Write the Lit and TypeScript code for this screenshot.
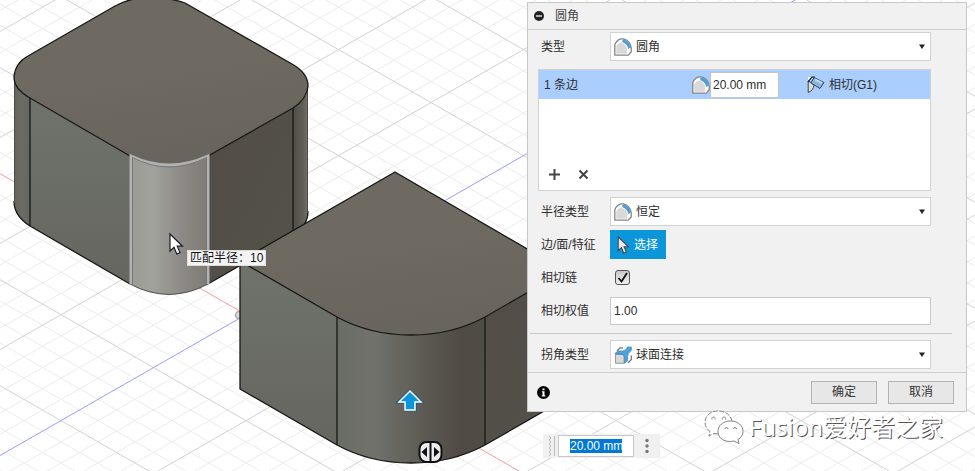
import { LitElement, html, svg, css } from "lit";
import { customElement } from "lit/decorators.js";

const HALF_W = 92.5;
const HALF_H = 53;
const ORIGIN = { x: 246, y: 314.6 };
const SLOPE = HALF_H / HALF_W;

/* Isometric ground grid: every fifth line is a major one, line 0 is an axis. */
const gridLine = (n: number, dir: number) => {
  const left = -600;
  const right = 3000;
  const at = (x: number) => ORIGIN.y + (n * HALF_H * 2) / 5 + dir * SLOPE * (x - ORIGIN.x);
  const cls = n === 0 ? (dir > 0 ? "axis-x" : "axis-y") : n % 5 === 0 ? "major" : "minor";
  return svg`<line class=${cls} x1=${left} y1=${at(left)} x2=${right} y2=${at(right)} />`;
};

const range = Array.from({ length: 241 }, (_, i) => i - 120);
const order = [...range.filter((n) => n % 5 !== 0), ...range.filter((n) => n % 5 === 0 && n !== 0), 0];

const filletIcon = html`<svg class="icon" viewBox="0 0 18 18" aria-hidden="true">
  <path d="M0.800 17.200V6.500Q2.500 2 7 0.800H9.500Q16 2.500 17.200 9.500V14L14 17.200Z" fill="#fff" stroke="#858585" stroke-width="1.300" stroke-linejoin="round" />
  <path d="M2.200 15.800V8.500Q3.500 5 7.500 4.500Q12.800 6 13.300 11.500V15.800Z" fill="#d9d9d9" />
  <path d="M8.500 1.200Q16 2.500 17 9.500L14 11Q13.200 6 8.200 4.600Z" fill="#4f9fd6" />
  <path d="M8 4.600Q13 6 13.800 11.500V16.500" fill="none" stroke="#fff" />
</svg>`;

const tangentIcon = html`<svg class="icon" viewBox="0 0 18 18" aria-hidden="true">
  <path d="M1.200 5V16.500Q6.500 14.500 7 9L4 6.500Z" fill="#ddddd8" stroke="#444" stroke-linejoin="round" />
  <path d="M1 3.500V1H6L3.500 5Z" fill="#fff" />
  <path d="M1 6L5 1.200L8 1.200" fill="none" stroke="#222" stroke-width="1.300" />
  <path d="M7 1.500L17 6.500L13 12.500L4 7Z" fill="#8bb4da" stroke="#2c4868" stroke-linejoin="round" />
  <path d="M8 3.500L15 7" stroke="#bcd7ef" stroke-width="2" />
</svg>`;

const cornerIcon = html`<svg class="icon" viewBox="0 0 18 18" aria-hidden="true">
  <path d="M1.500 8.500H10V17.300H1.500Z" fill="#d9d9d9" stroke="#999" />
  <path d="M3 5L6 1.800H9M17.300 9.500V13.500L14 17" fill="none" stroke="#777" stroke-width="1.300" />
  <path d="M1 7.500L4 5H9Q12.500 4 13.500 1H17.300V4.500Q13.500 7 13.500 11V15L10.500 17.300V11Q10 8 7 8H1Z" fill="#4fa3dc" stroke="#3585ba" stroke-width=".7" />
</svg>`;

const pointer = "M0 0V17L4 13.200L6.800 20L10 18.600L7.200 12.200H12.500Z";

@customElement("app-root")
export class AppRoot extends LitElement {
  static styles = css`
    :host {
      display: block;
      position: relative;
      min-height: 100vh;
      overflow: hidden;
      background: #fff;
      color: #2e2e2e;
      font: 12px/16px "Liberation Sans", "Noto Sans CJK SC", sans-serif;
    }
    * { box-sizing: border-box; }
    input, select, button { font: inherit; color: inherit; margin: 0; border-radius: 0; }
    .scene { position: absolute; inset: 0; width: 100%; height: 100%; display: block; }
    .minor { stroke: #ececec; }
    .major { stroke: #d2d2d2; }
    .axis-x { stroke: #f99b9b; }
    .axis-y { stroke: #9c9cfa; }
    .edge { fill: none; stroke: #171714; stroke-width: 1.3; stroke-linejoin: round; }
    .thin { fill: none; stroke: #4c4c48; }
    .glow { fill: none; stroke: #b2b2b2; stroke-width: 3; }
    .glow-core { fill: none; stroke: #777; stroke-width: 1; }
    .icon { display: block; width: 18px; height: 18px; flex: none; }

    .tip {
      position: absolute; left: 187px; top: 250px; height: 16px; padding: 0 2px;
      background: #f4f4f4; border: 1px solid #ddd; line-height: 14px; color: #111; white-space: nowrap;
    }

    .panel {
      position: absolute; left: 527px; right: 8px; top: 2px; min-width: 400px;
      background: #f1f1f1; border: 1px solid #c8c8c8;
    }
    .head {
      display: flex; align-items: center; height: 27px; gap: 11px; padding: 0 6px;
      border-bottom: 1px solid #cdcdcd;
    }
    .title { margin: 0; font-size: 12px; font-weight: 400; color: #444; }
    .fold { display: flex; padding: 0; border: 0; background: none; }
    .fold svg { width: 10px; height: 10px; }
    .form { padding: 2px 35px 0 10px; }
    .form.corner { padding-top: 0; }
    .row { display: grid; grid-template-columns: 70px 1fr; align-items: center; height: 29px; padding-left: 2px; }
    .row + .row { margin-top: 4px; }
    .row label { padding-left: 1px; }
    .combo { display: flex; position: relative; height: 29px; align-items: center; }
    .combo .icon { position: absolute; left: 4px; pointer-events: none; }
    .combo select {
      width: 100%; height: 100%; padding: 0 24px 0 25px; appearance: none;
      border: 1px solid #d2d2d2; background: #fff; outline: 0;
    }
    .caret { position: absolute; right: 6px; width: 6px; height: 5px; pointer-events: none; }
    .list {
      display: flex; flex-direction: column; justify-content: space-between;
      height: 122px; margin: 8px 0 6px; border: 1px solid #d2d2d2; background: #fff;
    }
    .item {
      display: grid; grid-template-columns: 148px 1fr 123px; align-items: center;
      height: 29px; padding-left: 5px; background: #aacfff;
    }
    .size { display: flex; align-items: center; }
    .size input { width: 69px; height: 26px; padding: 0 2px; border: 1px solid #c4c4c4; background: #fff; outline: 0; }
    .tangent { display: flex; align-items: center; gap: 4px; }
    .tangent select { appearance: none; border: 0; padding: 0; background: none; outline: 0; height: 24px; }
    .tools { display: flex; gap: 16px; padding: 0 0 9px 9px; }
    .tools button { display: flex; padding: 0; border: 0; background: none; }
    .tools svg { width: 13px; height: 13px; fill: none; stroke: #444; stroke-width: 2; }
    .pick {
      display: flex; align-items: center; justify-self: start; gap: 4px; width: 56px; height: 29px;
      padding: 0 0 0 7px; border: 0; background: #0c96da; color: #fff; white-space: nowrap;
    }
    .pick svg { width: 13px; height: 18px; flex: none; }
    .check {
      appearance: none; width: 15px; height: 15px; margin-left: 5px;
      border: 1px solid #555; border-radius: 3px; background: linear-gradient(#c8c8c8, #efefef);
    }
    .tick { display: flex; position: relative; }
    .tick svg { position: absolute; left: 7px; top: 2px; width: 11px; height: 11px; pointer-events: none; }
    .field { width: 100%; height: 28px; padding: 0 3px; border: 1px solid #c9c9c9; background: #fff; outline: 0; }
    .rule { height: 1px; margin: 8px 14px 6px 2px; border: 0; background: #c6c6c6; }
    .foot {
      display: flex; align-items: center; gap: 11px; height: 39px; margin-top: 3px; padding: 0 12px 0 9px;
      border-top: 1px solid #cdcdcd;
    }
    .info { display: flex; margin-right: auto; padding: 0; border: 0; background: none; }
    .info svg { width: 13px; height: 13px; }
    .action { width: 66px; height: 23px; padding: 0; border: 1px solid #b4b4b4; background: #e7e7e7; color: #333; }

    .manip {
      position: absolute; left: 543px; top: 434px; height: 24px; display: flex; align-items: center; gap: 2px;
      background: #f0f0f0; padding-right: 10px;
    }
    .grip { width: 13px; height: 22px; }
    .manip input {
      width: 76px; height: 22px; padding: 3px 11px; border: 1px solid #c8c8c8; outline: 0; color: #fff;
      background: linear-gradient(#0078d7, #0078d7) content-box, #fff;
    }
    .more { display: flex; margin-left: 8px; padding: 0; border: 0; background: none; }
    .more svg { width: 6px; height: 16px; }

    .mark {
      position: absolute; right: 32px; top: 408px; display: flex; align-items: center; gap: 5px;
      font: 24px/38px "Noto Sans", "Noto Sans CJK SC", sans-serif;
      color: #fff; text-shadow: 1px 1px 0 #555; white-space: nowrap;
    }
    .mark svg { width: 41px; height: 36px; }
  `;

  private combo(id: string, value: string, icon: unknown) {
    return html`<div class="combo">
      <select id=${id}><option>${value}</option></select>
      ${icon}
      <svg class="caret" viewBox="0 0 6 5" aria-hidden="true"><path d="M0 .5H6L3 5Z" fill="#222" /></svg>
    </div>`;
  }

  private scene() {
    return html`<svg class="scene" aria-hidden="true">
      <defs>
        <linearGradient id="top" x1="0" y1="0" x2=".3" y2="1">
          <stop offset="0" stop-color="#6e6a63" /><stop offset=".5" stop-color="#6e6a61" /><stop offset="1" stop-color="#69645d" />
        </linearGradient>
        <linearGradient id="left" x1="0" y1="0" x2="0" y2="1">
          <stop offset="0" stop-color="#70726c" /><stop offset="1" stop-color="#656660" />
        </linearGradient>
        <linearGradient id="right" x1="0" y1="0" x2="1" y2="1">
          <stop offset="0" stop-color="#514d46" /><stop offset="1" stop-color="#55524a" />
        </linearGradient>
        <linearGradient id="cornerL"><stop offset="0" stop-color="#65635b" /><stop offset=".5" stop-color="#6b6c66" /><stop offset="1" stop-color="#63655f" /></linearGradient>
        <linearGradient id="cornerR"><stop offset="0" stop-color="#504d46" /><stop offset=".7" stop-color="#625f58" /><stop offset="1" stop-color="#77736a" /></linearGradient>
        <linearGradient id="hot"><stop offset="0" stop-color="#9a9b95" /><stop offset=".3" stop-color="#a1a29c" /><stop offset=".65" stop-color="#8d8b87" /><stop offset="1" stop-color="#7e7a75" /></linearGradient>
        <linearGradient id="round"><stop offset="0" stop-color="#6a6c66" /><stop offset=".25" stop-color="#70726b" /><stop offset=".6" stop-color="#5b5952" /><stop offset=".85" stop-color="#4f4b44" /><stop offset="1" stop-color="#504d45" /></linearGradient>
      </defs>
      ${order.map((n) => [gridLine(n, 1), gridLine(n, -1)])}

      <circle cx="239" cy="315" r="3.500" fill="#ddd" stroke="#aaa" stroke-width="1.500" />

      <path d="M14 77V203Q15 217 30 226V98Q14 89 14 77Z" fill="url(#cornerL)" />
      <path d="M30 98V226L130 284V156Z" fill="url(#left)" />
      <path d="M208 156V284L293 235V108Z" fill="url(#right)" />
      <path d="M293 108V235Q308 226 308 213V86Q308 98 293 108Z" fill="url(#cornerR)" />
      <path d="M130 156V284Q148 294 169 294.500Q190 294 208 284V156Q169 176 130 156Z" fill="url(#hot)" />
      <path class="edge" d="M14 201Q14 216 30 226L130 284M208 284L293 235Q308 226 308 211M30 98V226M293 108V235" />
      <path class="thin" d="M14.500 77V203M307.500 86V213M130 284Q148 294 169 294.500Q190 294 208 284" />
      <path d="M14 77Q15 63 28 56L115 6Q145 -10 185 3L292 64Q308 73 308 86Q307 99 293 108L208 156Q169 176 130 156L30 98Q14 89 14 77Z" fill="url(#top)" />
      <path class="edge" d="M130 156L30 98Q14 89 14 77Q15 63 28 56L115 6Q145 -10 185 3L292 64Q308 73 308 86Q307 99 293 108L208 156" />
      <path class="glow" d="M131 284V156Q169 174 208 156V284" />
      <path class="glow-core" d="M132.500 284V157.500Q169 176.500 206.500 157.500V284" />

      <path d="M240 258V389L337 445V317Z" fill="url(#left)" />
      <path d="M485 317V445L640 356V228Z" fill="url(#right)" />
      <path d="M337 317V445Q370 463 411 463Q452 463 485 445V317Q410 353 337 317Z" fill="url(#round)" />
      <path d="M395 172L240 261L337 317Q370 335 411 335Q452 335 485 317L565 271Z" fill="url(#top)" />
      <path class="edge" d="M565 271L395 172L240 261L337 317Q370 335 411 335Q452 335 485 317L565 271M240 261V389L337 445Q370 463 411 463Q452 463 485 445L640 356M337 317V445M485 317V445" />

      <path d="M410 391L421.500 402H415.500V410H405.500V402H398.500Z" fill="#0c96da" stroke="#245a80" stroke-width="3" />
      <path d="M410 391L421 402H415V410H405V402H399Z" fill="#0c96da" stroke="#fff" stroke-width="1.500" />
      <rect x="419.500" y="442" width="22" height="20" rx="7" fill="#ececec" stroke="#111" stroke-width="2" />
      <path d="M430.500 442V462" stroke="#111" stroke-width="2" />
      <path d="M427 447V457L421.500 452ZM434 447V457L439.500 452Z" fill="#111" />
      <path transform="translate(170 234)" d=${pointer} fill="#fff" stroke="#1c1c28" stroke-width="1.200" />
    </svg>`;
  }

  render() {
    return html`
      ${this.scene()}
      <div class="tip" role="tooltip">匹配半径：10</div>

      <section class="panel" aria-labelledby="title">
        <header class="head">
          <button class="fold" aria-label="折叠">
            <svg viewBox="0 0 10 10"><circle cx="5" cy="5" r="5" fill="#222" /><path d="M2 5H8" stroke="#ddd" stroke-width="1.500" /></svg>
          </button>
          <h1 class="title" id="title">圆角</h1>
        </header>

        <div class="form">
          <div class="row"><label for="kind">类型</label>${this.combo("kind", "圆角", filletIcon)}</div>

          <div class="list">
            <div class="item">
              <span>1 条边</span>
              <span class="size">${filletIcon}<input aria-label="半径" value="20.00 mm" /></span>
              <span class="tangent">${tangentIcon}<select aria-label="连续性"><option>相切(G1)</option></select></span>
            </div>
            <div class="tools">
              <button aria-label="添加"><svg viewBox="0 0 13 13"><path d="M6.500 1V12M1 6.500H12" /></svg></button>
              <button aria-label="删除"><svg viewBox="0 0 13 13"><path d="M2.500 2.500L10.500 10.500M10.500 2.500L2.500 10.500" /></svg></button>
            </div>
          </div>

          <div class="row"><label for="radius">半径类型</label>${this.combo("radius", "恒定", filletIcon)}</div>
          <div class="row">
            <label for="pick">边/面/特征</label>
            <button class="pick" id="pick">
              <svg viewBox="-1 -1 15 22" aria-hidden="true"><path d=${pointer} fill="#e8e8e8" stroke="#444" stroke-width="1.300" /></svg>选择
            </button>
          </div>
          <div class="row">
            <label for="chain">相切链</label>
            <span class="tick">
              <input class="check" type="checkbox" id="chain" checked />
              <svg viewBox="0 0 11 11" aria-hidden="true"><path d="M1.500 6L4.500 9.500L10 1" fill="none" stroke="#111" stroke-width="1.800" /></svg>
            </span>
          </div>
          <div class="row"><label for="weight">相切权值</label><input class="field" id="weight" value="1.00" /></div>
        </div>
        <hr class="rule" />
        <div class="form corner">
          <div class="row"><label for="corner">拐角类型</label>${this.combo("corner", "球面连接", cornerIcon)}</div>
        </div>
        <footer class="foot">
          <button class="info" aria-label="信息">
            <svg viewBox="0 0 13 13"><circle cx="6.500" cy="6.500" r="6.500" fill="#000" /><path d="M5.500 2.500H7.500V4.200H5.500ZM4.800 5.200H7.500V9.300H8.300V10.500H4.800V9.300H5.500V6.300H4.800Z" fill="#fff" /></svg>
          </button>
          <button class="action">确定</button>
          <button class="action">取消</button>
        </footer>
      </section>

      <div class="manip">
        <svg class="grip" viewBox="0 0 13 22" aria-hidden="true">
          <path d="M6 1L8 3L6 5L8 7L6 9L8 11L6 13L8 15L6 17L8 19L6 21" fill="none" stroke="#bbb" />
          <path d="M11.500 1V21" stroke="#bbb" />
        </svg>
        <input aria-label="圆角半径" value="20.00 mm" />
        <button class="more" aria-label="更多">
          <svg viewBox="0 0 6 16"><circle cx="3" cy="2.500" r="1.700" fill="#777" /><circle cx="3" cy="8" r="1.700" fill="#777" /><circle cx="3" cy="13.500" r="1.700" fill="#777" /></svg>
        </button>
      </div>

      <div class="mark">
        <svg viewBox="0 0 41 36" aria-hidden="true">
          <g fill="#fff" stroke="#777" stroke-width=".9">
            <path d="M15 2C7 2 2 7 2 13.500C2 17.500 4 20.500 7 22.500L6 27L11 24.500C21 26.500 29 21 29 13.500C29 7 23 2 15 2Z" stroke-dasharray="5 1.500" />
            <path d="M27.500 12C20 12 15 16.500 15 22.500C15 29.500 22 34 31 32L36 34.500L35 30.500C38.500 28.500 40 25.500 40 22.500C40 16.500 35 12 27.500 12Z" />
            <path d="M9 10.500A1.700 1.700 0 1 1 12 10.500M19.500 10.500A1.700 1.700 0 1 1 22.500 10.500M22 20A1.500 1.500 0 1 1 25 20M30.500 20A1.500 1.500 0 1 1 33.500 20" />
          </g>
        </svg>
        <span>Fusion爱好者之家</span>
      </div>
    `;
  }
}
